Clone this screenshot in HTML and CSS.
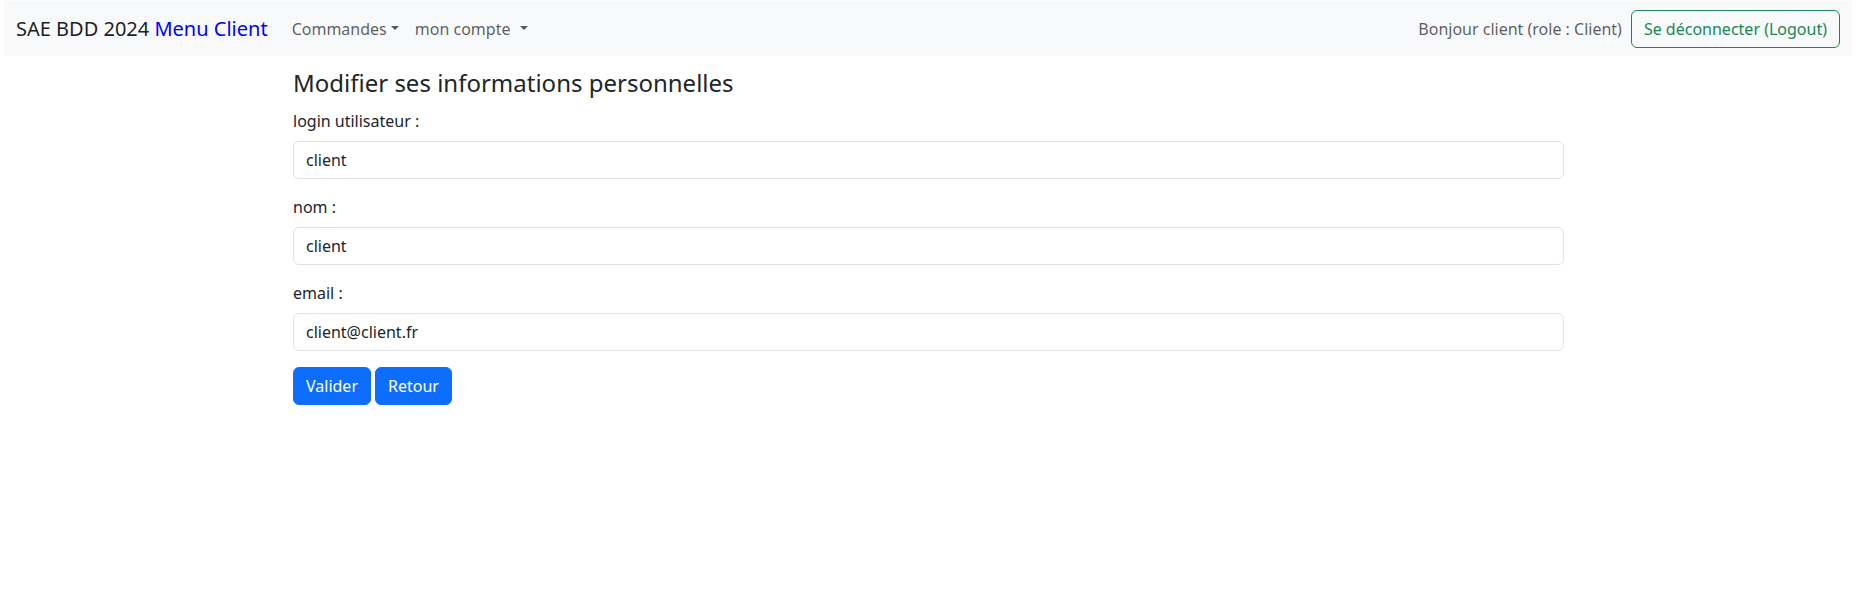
FILE: index.html
```html
<!DOCTYPE html>
<html lang="fr">
<head>
<meta charset="utf-8">
<title>SAE BDD 2024</title>
<link rel="stylesheet" href="styles.css">
</head>
<body>
<nav class="navbar">
  <div class="nav-left">
    <a class="brand" href="#">SAE BDD 2024 <span class="brand-accent">Menu Client</span></a>
    <ul class="nav-links">
      <li><a class="nav-link dropdown" href="#">Commandes</a></li>
      <li><a class="nav-link dropdown spaced" href="#">mon compte</a></li>
    </ul>
  </div>
  <div class="nav-right">
    <span class="greeting">Bonjour client (role : Client)</span>
    <a class="btn-outline" href="#">Se déconnecter (Logout)</a>
  </div>
</nav>
<main class="container">
  <h4 class="title">Modifier ses informations personnelles</h4>
  <form class="form">
    <div class="group">
      <label class="label" for="login">login utilisateur :</label>
      <input class="input" id="login" type="text" value="client">
    </div>
    <div class="group">
      <label class="label" for="nom">nom :</label>
      <input class="input" id="nom" type="text" value="client">
    </div>
    <div class="group">
      <label class="label" for="email">email :</label>
      <input class="input" id="email" type="text" value="client@client.fr">
    </div>
    <div class="actions">
      <button class="btn-primary" type="button">Valider</button>
      <button class="btn-primary" type="button">Retour</button>
    </div>
  </form>
</main>
</body>
</html>
```

FILE: styles.css
```css
* { box-sizing: border-box; }

html, body {
  margin: 0;
  padding: 0;
  background: #fff;
}

body {
  font-family: "Noto Sans", "Open Sans", "DejaVu Sans", sans-serif;
  font-size: 16px;
  line-height: 1.5;
  color: #212529;
}

a { text-decoration: none; }

.navbar {
  margin: 1px 8px 0 4px;
  height: 55px;
  padding: 0 12px;
  background: #f8f9fa;
  display: flex;
  align-items: center;
  justify-content: space-between;
}

.nav-left {
  display: flex;
  align-items: center;
}

.brand {
  font-size: 20px;
  line-height: 30px;
  padding: 5px 0;
  margin-right: 16px;
  color: rgba(0, 0, 0, 0.9);
  white-space: nowrap;
}

.brand-accent { color: #0000ff; }

.nav-links {
  list-style: none;
  margin: 0;
  padding: 0;
  display: flex;
}

.nav-link {
  display: block;
  padding: 8px;
  color: rgba(0, 0, 0, 0.65);
}

.dropdown::after {
  content: "";
  display: inline-block;
  margin-left: 0.255em;
  vertical-align: 0.255em;
  border-top: 0.3em solid;
  border-right: 0.3em solid transparent;
  border-left: 0.3em solid transparent;
  border-bottom: 0;
}

.dropdown.spaced::after { margin-left: 0.6em; }

.nav-right {
  display: flex;
  align-items: center;
}

.greeting {
  color: rgba(0, 0, 0, 0.65);
  margin-right: 9px;
}

.btn-outline {
  display: inline-block;
  padding: 6px 12px;
  border: 1px solid #198754;
  border-radius: 6px;
  color: #198754;
  line-height: 1.5;
}

.container {
  margin-left: 293px;
  width: 1271px;
}

.title {
  font-size: 24px;
  font-weight: 400;
  line-height: 1.2;
  margin: 13px 0 11px;
}

.form { margin: 0; }

.group { margin-bottom: 16px; }

.label {
  display: inline-block;
  margin-bottom: 8px;
}

.input {
  display: block;
  width: 100%;
  padding: 6px 12px;
  font: inherit;
  line-height: 1.5;
  color: #212529;
  background: #fff;
  border: 1px solid #dee2e6;
  border-radius: 6px;
}

.actions {
  display: flex;
  gap: 4px;
}

.btn-primary {
  font: inherit;
  line-height: 1.5;
  padding: 6px 12px;
  color: #fff;
  background: #0d6efd;
  border: 1px solid #0d6efd;
  border-radius: 6px;
}
```
